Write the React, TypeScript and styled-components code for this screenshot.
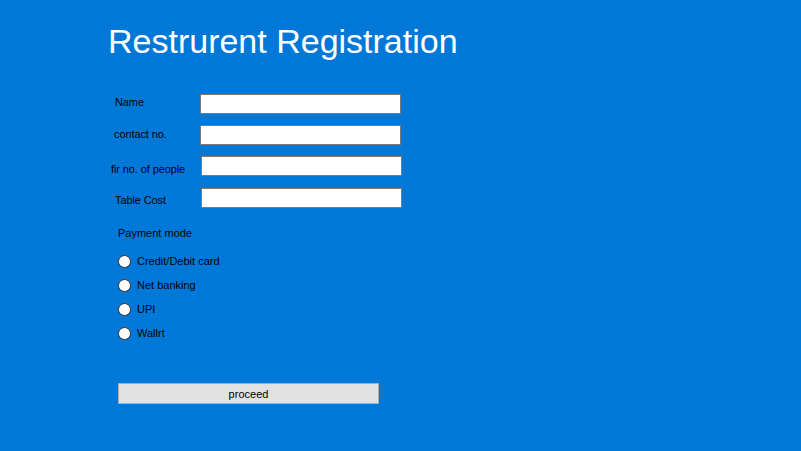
import React from "react";
import styled, { createGlobalStyle } from "styled-components";

const Global = createGlobalStyle`
  html, body { margin: 0; padding: 0; }
  body {
    background: #0078d7;
    font-family: "Liberation Sans", Arial, sans-serif;
  }
`;

const Page = styled.div`
  width: 801px;
  height: 451px;
  background: #0078d7;
  display: flex;
  flex-direction: column;
  overflow: hidden;
`;

const Title = styled.h1`
  margin: 22px 0 0 108px;
  font-family: "Liberation Sans", Arial, sans-serif;
  font-weight: 400;
  font-size: 34px;
  line-height: 38px;
  color: #ffffff;
`;

const Fields = styled.div`
  display: flex;
  flex-direction: column;
  margin-top: 34px;
`;

const Row = styled.div<{ $boxX: number; $gap: number }>`
  display: grid;
  grid-template-columns: ${(p) => p.$boxX}px 201px;
  height: 20px;
  margin-top: ${(p) => p.$gap}px;
`;

const Label = styled.label<{ $x: number; $dy: number }>`
  padding-left: ${(p) => p.$x}px;
  padding-top: ${(p) => p.$dy}px;
  font-size: 11px;
  line-height: 13px;
  letter-spacing: -0.1px;
  color: #000;
  white-space: nowrap;
`;

const TextBox = styled.input`
  box-sizing: border-box;
  width: 201px;
  height: 20px;
  margin: 0;
  padding: 0 3px;
  border: 1px solid #7a7a7a;
  background: #ffffff;
  outline: none;
  font-family: "Liberation Sans", Arial, sans-serif;
  font-size: 11px;
`;

const PaymentTitle = styled.div`
  margin: 19px 0 0 118px;
  font-size: 11px;
  line-height: 13px;
  color: #000;
`;

const RadioList = styled.div`
  display: flex;
  flex-direction: column;
  gap: 11px;
  margin: 15px 0 0 118px;
`;

const RadioRow = styled.label`
  display: flex;
  align-items: center;
  gap: 6px;
  height: 13px;
  font-size: 11px;
  line-height: 13px;
  color: #000;
`;

const RadioDot = styled.span`
  box-sizing: border-box;
  width: 13px;
  height: 13px;
  border-radius: 50%;
  border: 1px solid #333333;
  background: #ffffff;
  flex: none;
`;

const Button = styled.button`
  box-sizing: border-box;
  margin: 43px 0 0 118px;
  width: 261px;
  height: 21px;
  padding: 0;
  border: 1px solid #adadad;
  background: #e1e1e1;
  font-family: "Liberation Sans", Arial, sans-serif;
  font-size: 11px;
  color: #000;
`;

const fields = [
  { label: "Name", x: 115, dy: 2, boxX: 200, gap: 0 },
  { label: "contact no.", x: 114, dy: 3, boxX: 200, gap: 11 },
  { label: "fir no. of people", x: 111, dy: 7, boxX: 201, gap: 11 },
  { label: "Table Cost", x: 115, dy: 6, boxX: 201, gap: 12 },
];

const modes = ["Credit/Debit card", "Net banking", "UPI", "Wallrt"];

export default function App() {
  return (
    <Page>
      <Global />
      <Title>Restrurent Registration</Title>
      <Fields>
        {fields.map((f) => (
          <Row key={f.label} $boxX={f.boxX} $gap={f.gap}>
            <Label $x={f.x} $dy={f.dy}>{f.label}</Label>
            <TextBox type="text" />
          </Row>
        ))}
      </Fields>
      <PaymentTitle>Payment mode</PaymentTitle>
      <RadioList>
        {modes.map((m) => (
          <RadioRow key={m}>
            <RadioDot />
            {m}
          </RadioRow>
        ))}
      </RadioList>
      <Button>proceed</Button>
    </Page>
  );
}
